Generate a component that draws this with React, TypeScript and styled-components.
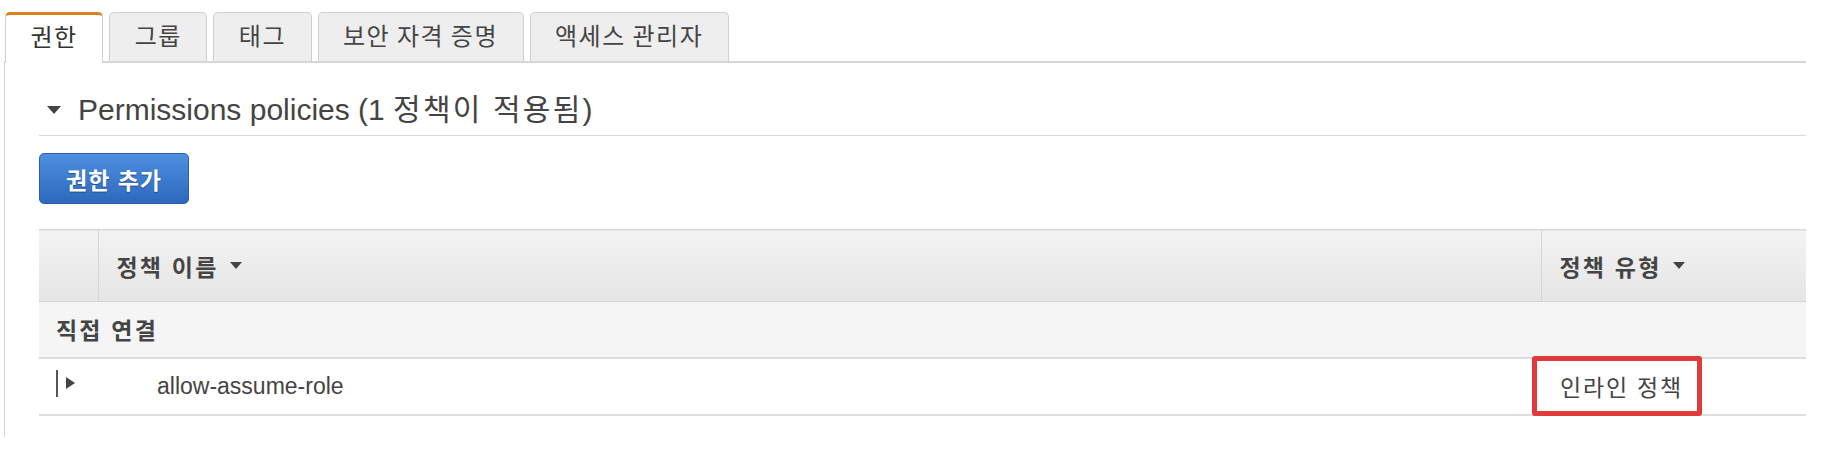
import React from "react";
import styled, { createGlobalStyle, css } from "styled-components";

const GlobalStyle = createGlobalStyle`
  html, body { margin: 0; padding: 0; background: #ffffff; }
  body {
    font-family: "Liberation Sans", "Noto Sans CJK KR", Arial, sans-serif;
    color: #444444;
  }
  * { box-sizing: border-box; }
`;

const Page = styled.div`
  width: 1806px;
  padding: 12px 0 0 4px;
`;

const TabBar = styled.div`
  display: flex;
  align-items: flex-end;
  gap: 6px;
  border-bottom: 2px solid #d6d6d6;
  padding-left: 1px;
`;

const Tab = styled.div<{ $active?: boolean }>`
  height: 49px;
  padding: 0 24.5px;
  display: flex;
  align-items: center;
  font-size: 24px;
  line-height: 1;
  letter-spacing: 1.5px;
  word-spacing: -1.4px;
  color: #444444;
  background: #eeeeee;
  border: 1px solid #cfcfcf;
  border-bottom: none;
  border-radius: 5px 5px 0 0;
  white-space: nowrap;
  cursor: pointer;
  ${(p) =>
    p.$active &&
    css`
      height: 51px;
      margin-bottom: -2px;
      padding-bottom: 2px;
      background: #ffffff;
      border-top: 3px solid #e07f1f;
      color: #333333;
    `}
`;

const Panel = styled.div`
  border-left: 1px solid #d6d6d6;
  padding: 29px 0 21px 34px;
`;

const SectionHeader = styled.div`
  display: flex;
  align-items: center;
  gap: 17px;
  padding: 0 0 7px 8px;
  border-bottom: 1px solid #d9d9d9;
`;

const Caret = styled.svg<{ $w: number; $h: number }>`
  width: ${(p) => p.$w}px;
  height: ${(p) => p.$h}px;
  flex: none;
  fill: #444444;
`;

const SectionTitle = styled.h2`
  margin: 0;
  font-size: 30px;
  line-height: 36px;
  font-weight: 400;
  color: #444444;
  white-space: nowrap;
`;

const Hangul = styled.span<{ $ls: number }>`
  letter-spacing: ${(p) => p.$ls}px;
`;

const PrimaryButton = styled.button`
  margin-top: 17px;
  height: 51px;
  padding: 0 26px;
  font-family: inherit;
  font-size: 23px;
  font-weight: 700;
  letter-spacing: 1px;
  color: #ffffff;
  text-shadow: 0 1px 1px rgba(0, 0, 0, 0.35);
  background: linear-gradient(#4d8fe0, #2e68bd);
  border: 1px solid #2a5eab;
  border-radius: 5px;
  cursor: pointer;
`;

const Table = styled.table`
  margin-top: 25px;
  width: 1767px;
  border-collapse: collapse;
  table-layout: fixed;
  font-size: 23px;
  color: #444444;
`;

const HeadRow = styled.tr`
  height: 72px;
  background: linear-gradient(#f3f3f3, #e5e5e5);
  border-top: 1px solid #dadada;
  border-bottom: 1px solid #d3d3d3;
`;

const HeadCell = styled.th<{ $w?: number }>`
  ${(p) => p.$w && `width: ${p.$w}px;`}
  padding: 0 0 0 18px;
  text-align: left;
  font-weight: 700;
  white-space: nowrap;
  border-left: 1px solid #d6d6d6;
  &:first-child { border-left: none; padding: 0; }
`;

const SortLabel = styled.span`
  display: inline-flex;
  align-items: center;
  gap: 11px;
  letter-spacing: 2.2px;
`;

const GroupRow = styled.tr`
  height: 56px;
  background: #f5f5f5;
  border-bottom: 2px solid #dddddd;
`;

const GroupCell = styled.td`
  padding: 0 0 0 17px;
  font-weight: 700;
  letter-spacing: 2.2px;
  white-space: nowrap;
`;

const DataRow = styled.tr`
  height: 57px;
  border-bottom: 2px solid #dddddd;
`;

const DataCell = styled.td<{ $pad?: number }>`
  padding: 0 0 0 ${(p) => p.$pad ?? 0}px;
  white-space: nowrap;
  vertical-align: middle;
`;

const Expander = styled.span`
  display: inline-flex;
  align-items: center;
  gap: 8px;
  margin-left: 17px;
`;

const ExpanderBar = styled.span`
  width: 2px;
  height: 27px;
  background: #555555;
`;

const TypeBox = styled.div`
  position: relative;
  height: 55px;
  display: flex;
  align-items: center;
  padding-left: 19px;
  letter-spacing: 1.8px;
`;

const Highlight = styled.div`
  position: absolute;
  left: -9px;
  top: -3px;
  width: 170px;
  height: 60px;
  border: 5px solid #e03a3a;
  border-radius: 3px;
  pointer-events: none;
`;

const tabs = ["권한", "그룹", "태그", "보안 자격 증명", "액세스 관리자"];

const DownCaret = ({ w, h }: { w: number; h: number }) => (
  <Caret $w={w} $h={h} viewBox="0 0 14 8">
    <polygon points="0,0 14,0 7,8" />
  </Caret>
);

export default function App() {
  return (
    <>
      <GlobalStyle />
      <Page>
        <TabBar>
          {tabs.map((t, i) => (
            <Tab key={t} $active={i === 0}>
              {t}
            </Tab>
          ))}
        </TabBar>
        <Panel>
          <SectionHeader>
            <DownCaret w={14} h={8} />
            <SectionTitle>
              Permissions policies (1 <Hangul $ls={2.2}>정책이 적용됨</Hangul>)
            </SectionTitle>
          </SectionHeader>
          <PrimaryButton>권한 추가</PrimaryButton>
          <Table>
            <thead>
              <HeadRow>
                <HeadCell $w={59} />
                <HeadCell>
                  <SortLabel>
                    정책 이름
                    <DownCaret w={12} h={7} />
                  </SortLabel>
                </HeadCell>
                <HeadCell $w={265}>
                  <SortLabel>
                    정책 유형
                    <DownCaret w={12} h={7} />
                  </SortLabel>
                </HeadCell>
              </HeadRow>
            </thead>
            <tbody>
              <GroupRow>
                <GroupCell colSpan={3}>직접 연결</GroupCell>
              </GroupRow>
              <DataRow>
                <DataCell>
                  <Expander>
                    <ExpanderBar />
                    <svg width="9" height="12" viewBox="0 0 9 12">
                      <polygon points="0,0 9,6 0,12" fill="#444444" />
                    </svg>
                  </Expander>
                </DataCell>
                <DataCell $pad={59}>allow-assume-role</DataCell>
                <DataCell>
                  <TypeBox>
                    <Highlight />
                    인라인 정책
                  </TypeBox>
                </DataCell>
              </DataRow>
            </tbody>
          </Table>
        </Panel>
      </Page>
    </>
  );
}
